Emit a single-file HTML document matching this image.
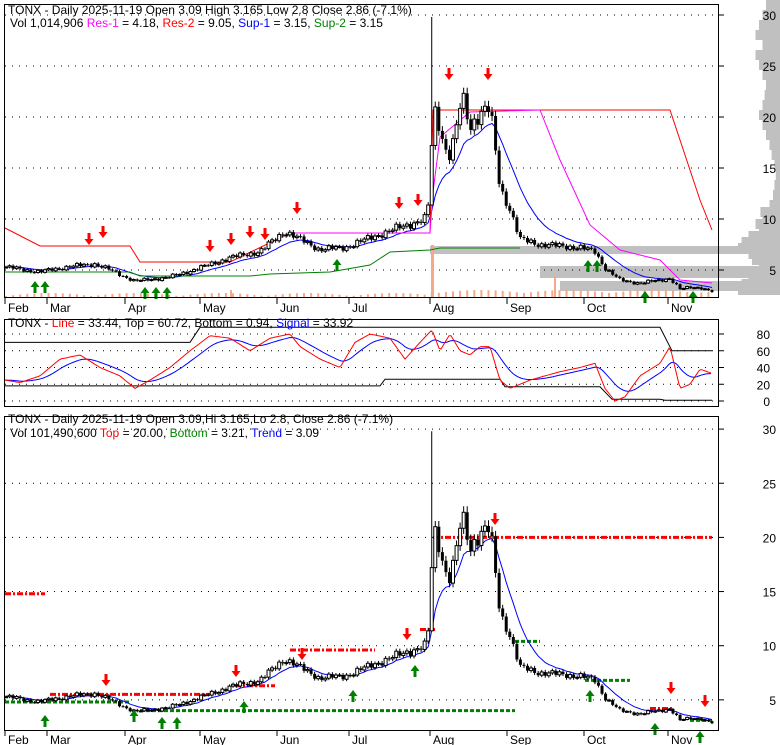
<!DOCTYPE html><html><head><meta charset="utf-8"><style>
body{margin:0;background:#fff;width:780px;height:745px;overflow:hidden}
svg{display:block;font-family:"Liberation Sans",sans-serif}
</style></head><body>
<svg id="s" width="780" height="745" xmlns="http://www.w3.org/2000/svg"></svg>
<script>
var S=document.getElementById('s'),o='';
function L(x1,y1,x2,y2,c,w,d){o+='<line x1="'+x1+'" y1="'+y1+'" x2="'+x2+'" y2="'+y2+'" stroke="'+c+'" stroke-width="'+(w||1)+'"'+(d?' stroke-dasharray="'+d+'"':'')+'/>';}
function R(x,y,w,h,f,s){o+='<rect x="'+x+'" y="'+y+'" width="'+w+'" height="'+h+'" fill="'+f+'"'+(s?' stroke="'+s+'" stroke-width="1"':'')+'/>';}
function T(x,y,t,c,a){o+='<text x="'+x+'" y="'+y+'" font-size="12" fill="'+(c||'#000')+'"'+(a?' text-anchor="'+a+'"':'')+'>'+t+'</text>';}
function P(pts,c,w,d){o+='<polyline fill="none" stroke="'+c+'" stroke-width="'+(w||1)+'"'+(d?' stroke-dasharray="'+d+'"':'')+' points="'+pts.map(function(p){return p[0].toFixed(1)+','+p[1].toFixed(1)}).join(' ')+'"/>';}
function interp(k,x){for(var i=1;i<k.length;i++){if(x<=k[i][0]){var a=k[i-1],b=k[i];return a[1]+(b[1]-a[1])*(x-a[0])/(b[0]-a[0]);}}return k[k.length-1][1];}
var K=[[5,5.3],[40,4.8],[60,5.2],[95,5.6],[110,5.0],[135,3.9],[170,4.3],[200,5.2],[230,6.2],[260,6.8],[285,8.8],[300,8],[320,7],[345,7.2],[380,8.5],[410,9.5],[425,10],[430,12],[433,21],[440,19],[448,16],[455,18],[462,22],[470,19],[480,20.5],[490,20.8],[495,17],[500,13],[510,11],[520,8],[540,7.5],[580,7.2],[595,6.8],[605,5.2],[620,4],[640,3.7],[660,4],[670,4.2],[680,3.1],[690,3.3],[700,3.3],[712,2.86]];
var N=200,xs=[],cl=[];
for(var i=0;i<N;i++){var x=6+i*(706/(N-1));xs.push(x);var n=Math.sin(i*2.3)*0.03+Math.sin(i*0.7)*0.02;var p=interp(K,x);cl.push(p*(1+n));}
var y1=function(p){return 321-10.2*p},y3=function(p){return 754-10.83*p},y2=function(v){return 401-0.8375*v};
function frame(t,b){R(4.5,t+.5,714,b-t,'none','#000');}
// volume profile (drawn first)
var vp=[[5,20],[15,25],[25,30],[35,35],[45,25],[55,35],[65,30],[75,25],[85,20],[95,22],[105,25],[115,30],[125,25],[135,20],[145,15],[155,12],[165,8],[175,6],[185,8],[195,10],[205,15],[212,28],[218,25],[224,35],[230,30],[236,45],[242,55],[248,60],[254,45],[260,40],[266,30],[272,40],[278,45],[284,55],[290,60]];
vp.forEach(function(v){R(780-v[1]*0.7,v[0]-5,v[1]*0.7,10,'#c0c0c0');});
R(430,246,350,8,'#c0c0c0');R(540,266,240,12,'#c0c0c0');R(560,281,220,10,'#c0c0c0');
// grid
[30,25,20,15,10,5].forEach(function(v){L(5,y1(v),718,y1(v),'#000',1,'1 6');L(719,y1(v),724,y1(v),'#000');T(776,y1(v)+5,v,'#000','end');});
[80,60,40,20,0].forEach(function(v){L(5,y2(v),718,y2(v),'#000',1,'1 6');L(719,y2(v),724,y2(v),'#000');T(770,y2(v)+5,v,'#000','end');});
[30,25,20,15,10,5].forEach(function(v){L(5,y3(v),718,y3(v),'#000',1,'1 6');L(719,y3(v),724,y3(v),'#000');T(776,y3(v)+5,v,'#000','end');});
// volume bars
for(var i=0;i<N;i+=2){var h=1+Math.abs(Math.sin(i*1.7))*3;if(xs[i]>430)h+=3;R(xs[i]-1,297-h,2,h,'#f4a98a');}
R(431,245,3,52,'#f4a98a');R(230,290,2,7,'#f4a98a');R(554,276,2,21,'#f4a98a');
var ema=[],e=cl[0];for(var i=0;i<N;i++){e=e+(cl[i]-e)*0.15;ema.push(e);}
P(xs.map(function(x,i){return[x,y1(ema[i])]}),'#0000ff');
P([[5,228],[40,246],[60,246],[130,246],[140,262],[230,262],[290,233],[430,233],[433,110],[670,110],[700,200],[712,230]],'#ff0000');
P([[290,233],[430,233],[433,192],[440,137],[470,112],[540,110],[560,160],[590,225],[620,250],[660,260],[680,280],[712,283]],'#ff00ff');
P([[5,272],[130,272],[140,276],[250,276],[270,274],[330,272],[370,265],[390,252],[430,250],[440,248],[520,248]],'#008000');
function candles(yf){for(var i=0;i<N;i++){var c=cl[i],op=i?cl[i-1]:c,hi=Math.max(c,op)*1.025,lo=Math.min(c,op)*0.975,x=xs[i];if(Math.abs(x-433)<2){hi=29.8;lo=13.8;}
L(x,yf(hi),x,yf(lo),'#000');var t=yf(Math.max(c,op)),b=yf(Math.min(c,op));var h=Math.max(b-t,1);if(c>=op)R(x-1.5,t,3,h,'#fff','#000');else R(x-1.5,t,3,h,'#000');}}
candles(y1);
function dn(x,y){o+='<path d="M'+(x-1.5)+' '+(y-10)+'h3v6h3l-4.5,6l-4.5,-6h3z" fill="#ff0000"/>';}
function up(x,y){o+='<path d="M'+(x-1.5)+' '+(y+10)+'h3v-6h3l-4.5,-6l-4.5,6h3z" fill="#008000"/>';}
[[89,243],[103,236],[210,250],[231,243],[250,236],[265,238],[297,212],[399,207],[418,204],[449,78],[488,78]].forEach(function(a){dn(a[0],a[1]);});
[[35,283],[45,283],[145,289],[156,289],[167,289],[337,261],[588,262],[597,262],[645,293],[693,293]].forEach(function(a){up(a[0],a[1]);});
frame(4,297);
var D=[['Feb',8],['Mar',50],['Apr',128],['May',203],['Jun',280],['Jul',352],['Aug',433],['Sep',510],['Oct',587],['Nov',671]];
function dates(y){D.forEach(function(d){L(d[1]-3,y-14,d[1]-3,y-8,'#000');T(d[1],y,d[0]);});}
dates(312);dates(744);
var rk=[[5,25],[20,22],[40,30],[60,50],[80,55],[100,40],[120,30],[135,15],[150,25],[170,40],[190,60],[210,78],[230,75],[250,60],[270,75],[290,80],[300,65],[320,50],[340,40],[355,70],[370,80],[390,75],[405,50],[420,70],[432,85],[440,60],[450,80],[460,60],[470,55],[480,65],[490,65],[500,25],[510,15],[530,25],[560,35],[580,40],[595,45],[605,15],[615,0],[625,5],[640,30],[660,45],[670,65],[680,15],[690,20],[700,38],[712,33]];
var rx=[],rv=[],bv=[],b=25;for(var x=5;x<=712;x+=2){var v=interp(rk,x);rx.push(x);rv.push(v);b=b+(v-b)*0.12;bv.push(b);}
P([[5,70],[190,70],[200,88],[660,88],[672,60],[712,60]].map(function(p){return[p[0],y2(p[1])]}),'#000');
P([[5,18],[380,18],[385,26],[500,26],[505,17],[600,17],[612,2],[660,2],[665,1],[712,1]].map(function(p){return[p[0],y2(p[1])]}),'#000');
P(rx.map(function(x,i){return[x,y2(bv[i])]}),'#0000ff');
P(rx.map(function(x,i){return[x,y2(rv[i])]}),'#ff0000');
frame(319,406);
[[5,45,14.8],[50,210,5.5],[235,275,6.3],[290,375,9.6],[420,435,11.5],[433,712,20],[650,672,4.2]].forEach(function(s){L(s[0],y3(s[2]),s[1],y3(s[2]),'#ff0000',3,'6 2 2 2');});
[[5,130,4.8],[140,515,4],[515,540,10.4],[585,630,6.8],[690,712,3.1]].forEach(function(s){L(s[0],y3(s[2]),s[1],y3(s[2]),'#008000',3,'4 2');});
var e2=[],e=cl[0];for(var i=0;i<N;i++){e=e+(cl[i]-e)*0.2;e2.push(e);}
P(xs.map(function(x,i){return[x,y3(e2[i])]}),'#0000ff');
candles(y3);
[[106,684],[236,675],[302,658],[407,638],[495,523],[671,692],[705,705]].forEach(function(a){dn(a[0],a[1]);});
[[45,717],[134,712],[162,719],[177,719],[244,703],[353,692],[415,667],[590,692],[655,725],[700,733]].forEach(function(a){up(a[0],a[1]);});
frame(416,730);
T(8,14,'TONX - Daily 2025-11-19 Open 3.09  High 3.165  Low 2.8  Close 2.86 (-7.1%)');
o+='<text x="10" y="27" font-size="12">Vol 1,014,906 <tspan fill="#ff00ff">Res-1</tspan> = 4.18, <tspan fill="#ff0000">Res-2</tspan> = 9.05, <tspan fill="#0000ff">Sup-1</tspan> = 3.15, <tspan fill="#008000">Sup-2</tspan> = 3.15</text>';
o+='<text x="8" y="327" font-size="12">TONX - <tspan fill="#ff0000">Line</tspan> = 33.44, Top = 60.72, Bottom = 0.94, <tspan fill="#0000ff">Signal</tspan> = 33.92</text>';
T(8,423,'TONX - Daily 2025-11-19 Open 3.09,Hi 3.165,Lo 2.8, Close 2.86 (-7.1%)');
o+='<text x="10" y="437" font-size="12">Vol 101,490,600 <tspan fill="#ff0000">Top</tspan> = 20.00, <tspan fill="#008000">Bottom</tspan> = 3.21, <tspan fill="#0000ff">Trend</tspan> = 3.09</text>';
S.innerHTML=o;
</script></body></html>
